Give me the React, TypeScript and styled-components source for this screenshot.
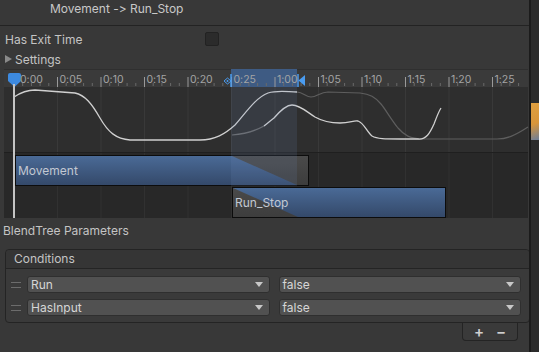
import styled, { createGlobalStyle } from "styled-components";

const GlobalStyle = createGlobalStyle`
  html, body {
    margin: 0;
    padding: 0;
    background: #383838;
  }
  body {
    width: 539px;
    height: 352px;
    overflow: hidden;
    font-family: Inter, "Noto Sans", sans-serif;
    font-size: 12px;
    color: #c4c4c4;
    font-feature-settings: "calt" 0, "liga" 0;
    font-variant-ligatures: none;
  }
`;

const TICK0 = 14;
const STEP = 43.5;
const labels = ["0:00", "0:05", "0:10", "0:15", "0:20", "0:25", "1:00", "1:05", "1:10", "1:15", "1:20", "1:25"];
const majors = labels.map((_, i) => TICK0 + STEP * i);

const Window = styled.div`
  display: flex;
  width: 539px;
  height: 352px;
`;

const Inspector = styled.div`
  width: 529px;
  display: flex;
  flex-direction: column;
`;

const SideStrip = styled.div`
  flex: 1;
  border-left: 2px solid #1b1b1b;
  background: #2b2b2b;
  display: flex;
  flex-direction: column;
`;

const SceneGlimpse = styled.div`
  margin-top: 103px;
  height: 37px;
  background: linear-gradient(160deg, #e0a040 0%, #d8953a 55%, #6d7e9a 100%);
`;

const TitleBar = styled.div`
  height: 25px;
  border-bottom: 1px solid #232323;
  padding-left: 50px;
  line-height: 18px;
  color: #c8c8c8;
`;

const FieldRow = styled.div`
  display: flex;
  align-items: center;
  height: 18px;
  margin-top: 4px;
  padding-left: 5px;
`;

const FieldLabel = styled.span`
  width: 200px;
`;

const Checkbox = styled.div`
  width: 12px;
  height: 12px;
  border: 1px solid #222;
  border-radius: 2px;
  background: #2b2b2b;
`;

const Foldout = styled.div`
  display: flex;
  align-items: center;
  gap: 3px;
  height: 18px;
  margin-top: 2px;
  padding-left: 5px;
`;

const FoldArrow = styled.span`
  width: 0;
  height: 0;
  border-top: 4px solid transparent;
  border-bottom: 4px solid transparent;
  border-left: 7px solid #8a8a8a;
`;

const Timeline = styled.div`
  position: relative;
  margin: 1px 0 0 4px;
  width: 524px;
  display: flex;
  flex-direction: column;
`;

const Ruler = styled.div`
  position: relative;
  height: 18px;
  background: #3a3a3a;
  border-top: 1px solid #2f2f2f;
  box-sizing: border-box;
`;

const RulerLabel = styled.span<{ $x: number }>`
  position: absolute;
  left: ${(p) => p.$x - 4 + 2}px;
  top: 3px;
  font-size: 10.5px;
  line-height: 14px;
  color: #a4a4a4;
`;

const Selection = styled.div`
  position: absolute;
  left: 227px;
  width: 66px;
  top: -1px;
  bottom: 0;
  background: #3e5b83;
`;

const CurveArea = styled.div`
  position: relative;
  height: 65px;
  background: #2e2e2e;
  border-bottom: 1px solid #1f1f1f;
`;

const BarsArea = styled.div`
  position: relative;
  height: 65px;
  background: #282828;
`;

const Layer = styled.svg`
  position: absolute;
  left: 0;
  top: 0;
  overflow: visible;
`;

const TransitionShade = styled.div`
  position: absolute;
  left: 227px;
  width: 66px;
  top: 18px;
  height: 99px;
  background: rgba(110, 140, 190, 0.14);
  pointer-events: none;
`;

const Clip = styled.div<{ $left: number; $top: number; $width: number }>`
  position: absolute;
  left: ${(p) => p.$left}px;
  top: ${(p) => p.$top}px;
  width: ${(p) => p.$width}px;
  height: 31px;
  box-sizing: border-box;
  border: 1px solid #0c0c0c;
  background: linear-gradient(#4a4a4a, #3d3d3d);
  overflow: hidden;
`;

const ClipFill = styled.div`
  position: absolute;
  inset: 0;
  background: linear-gradient(#4a6a96, #34496a);
`;

const ClipText = styled.span`
  position: relative;
  display: block;
  padding-left: 2px;
  line-height: 29px;
  font-size: 12px;
  color: #c2c8d2;
`;

const PlayheadLine = styled.div`
  position: absolute;
  left: 9px;
  top: 15px;
  bottom: 0;
  width: 2px;
  background: #c4c4c4;
`;

const SectionLabel = styled.div`
  margin-top: 4px;
  padding-left: 3px;
  line-height: 18px;
`;

const ListBox = styled.div`
  margin: 9px 0 0 5px;
  width: 523px;
  border: 1px solid #242424;
  border-radius: 4px;
  background: #3a3a3a;
`;

const ListHeader = styled.div`
  height: 18px;
  line-height: 18px;
  padding-left: 8px;
  background: #353535;
  border-bottom: 1px solid #242424;
  border-radius: 4px 4px 0 0;
`;

const ListBody = styled.div`
  display: flex;
  flex-direction: column;
  gap: 6px;
  padding: 7px 8px 6px 4px;
`;

const ConditionRow = styled.div`
  display: flex;
  align-items: center;
  gap: 9px;
`;

const DragHandle = styled.div`
  width: 10px;
  margin-left: 1px;
  margin-right: -3px;
  height: 4px;
  border-top: 1px solid #6c6c6c;
  border-bottom: 1px solid #6c6c6c;
`;

const Dropdown = styled.div`
  flex: 1;
  height: 17px;
  display: flex;
  align-items: center;
  justify-content: space-between;
  padding: 0 6px 0 3px;
  box-sizing: border-box;
  background: #515151;
  border: 1px solid #2f2f2f;
  border-radius: 3px;
  color: #d6d6d6;
`;

const DropArrow = styled.span`
  width: 0;
  height: 0;
  border-left: 4px solid transparent;
  border-right: 4px solid transparent;
  border-top: 5px solid #c8c8c8;
`;

const ListFooter = styled.div`
  align-self: flex-end;
  margin-right: 11px;
  width: 56px;
  height: 18px;
  box-sizing: border-box;
  display: flex;
  align-items: center;
  justify-content: center;
  gap: 12px;
  border: 1px solid #242424;
  border-top: none;
  border-radius: 0 0 4px 4px;
  background: #3a3a3a;
  font-size: 15px;
  font-weight: 600;
  color: #cfcfcf;
`;

const conditions = [
  { name: "Run", value: "false" },
  { name: "HasInput", value: "false" },
];

const RulerTicks = () => {
  const minor: number[] = [];
  majors.forEach((x) => {
    for (let k = 1; k < 5; k++) minor.push(x + (STEP / 5) * k);
  });
  return (
    <Layer width={524} height={18}>
      <g transform="translate(-4,-69)">
        {majors.map((x) => (
          <line key={x} x1={x} x2={x} y1={76} y2={86} stroke="#9a9a9a" strokeWidth={1} />
        ))}
        {minor
          .filter((x) => x < 527)
          .map((x) => (
            <line key={x} x1={x} x2={x} y1={82} y2={85} stroke="#6a6a6a" strokeWidth={1} />
          ))}
        {/* transition start handle */}
        <path d="M224 80 L227.5 77 L231 80 L227.5 83 Z" fill="none" stroke="#4a9cf0" strokeWidth={1} />
        <circle cx={227.5} cy={80} r={1} fill="#4a9cf0" />
        <line x1={231} x2={231} y1={73} y2={86} stroke="#4a9cf0" strokeWidth={1.5} />
        {/* transition end handle */}
        <line x1={298} x2={298} y1={73} y2={86} stroke="#4a9cf0" strokeWidth={1.5} />
        <path d="M298.5 79.5 L305 74 L305 85 Z" fill="#4a9cf0" />
        {/* playhead */}
        <path d="M8 74 Q8 72 10 72 L19 72 Q21 72 21 74 L21 80 L14.5 86 L8 80 Z" fill="#3d8ae0" />
      </g>
    </Layer>
  );
};

const Curves = () => (
  <Layer width={524} height={65}>
    <g transform="translate(-4,-87)">
      {majors.slice(1).map((x) => (
        <line key={x} x1={x} x2={x} y1={87} y2={152} stroke="#393939" strokeWidth={1} />
      ))}
      <path
        d="M297 92 C303 92 306 97 311 97 C317 97 320 92 328 92 L360 93 C370 94 375 97 381 104 C386 110 390 118 398 128 C404 135 410 139 423 139 L497 139 C507 139 514 136 528 127"
        fill="none"
        stroke="#5e5e5e"
        strokeWidth={1.2}
      />
      <path d="M232 135 C245 134 255 131 264 126" fill="none" stroke="#6a6a6a" strokeWidth={1.2} />
      <path
        d="M14 97 C20 93 27 90 35 90 L75 93 C85 95 92 104 100 118 C108 132 116 139 130 140 L200 140 C215 140 225 134 235 125 C245 114 255 98 268 93 C278 90 288 92 297 92"
        fill="none"
        stroke="#d0d0d0"
        strokeWidth={1.3}
      />
      <path
        d="M264 126 C268 123 270 121 274 118 C280 111 286 105 292 105 C300 105 307 112 315 117 C322 121 330 123 340 123 C350 123 354 120 358 121 C364 123 367 132 372 136 C377 139 385 139 400 139 L418 139 C426 140 430 133 434 124 C437 116 439 111 441 108"
        fill="none"
        stroke="#d0d0d0"
        strokeWidth={1.3}
      />
    </g>
  </Layer>
);

const BarGrid = () => (
  <Layer width={524} height={65}>
    <g transform="translate(-4,-153)">
      {majors.slice(1).map((x) => (
        <line key={x} x1={x} x2={x} y1={153} y2={218} stroke="#313131" strokeWidth={1} />
      ))}
    </g>
  </Layer>
);

const App = () => {
  return (
    <Window>
      <GlobalStyle />
      <Inspector>
        <TitleBar>Movement -&gt; Run_Stop</TitleBar>
        <FieldRow>
          <FieldLabel>Has Exit Time</FieldLabel>
          <Checkbox />
        </FieldRow>
        <Foldout>
          <FoldArrow />
          Settings
        </Foldout>
        <Timeline>
          <Ruler>
            <Selection />
            <RulerTicks />
            {labels.map((l, i) => (
              <RulerLabel key={l} $x={i === 0 ? majors[i] + 4 : majors[i]}>
                {l}
              </RulerLabel>
            ))}
          </Ruler>
          <CurveArea>
            <Curves />
          </CurveArea>
          <BarsArea>
            <BarGrid />
            <Clip $left={11} $top={2} $width={294}>
              <ClipFill style={{ clipPath: "polygon(0 0, 216px 0, 281px 100%, 0 100%)" }} />
              <ClipText>Movement</ClipText>
            </Clip>
            <Clip $left={228} $top={34} $width={214}>
              <ClipFill style={{ clipPath: "polygon(0 0, 100% 0, 100% 100%, 65px 100%)" }} />
              <ClipText>Run_Stop</ClipText>
            </Clip>
          </BarsArea>
          <TransitionShade />
          <PlayheadLine />
        </Timeline>
        <SectionLabel>BlendTree Parameters</SectionLabel>
        <ListBox>
          <ListHeader>Conditions</ListHeader>
          <ListBody>
            {conditions.map((c) => (
              <ConditionRow key={c.name}>
                <DragHandle />
                <Dropdown>
                  {c.name}
                  <DropArrow />
                </Dropdown>
                <Dropdown>
                  {c.value}
                  <DropArrow />
                </Dropdown>
              </ConditionRow>
            ))}
          </ListBody>
        </ListBox>
        <ListFooter>
          <span>+</span>
          <span>−</span>
        </ListFooter>
      </Inspector>
      <SideStrip>
        <SceneGlimpse />
      </SideStrip>
    </Window>
  );
};

export default App;
